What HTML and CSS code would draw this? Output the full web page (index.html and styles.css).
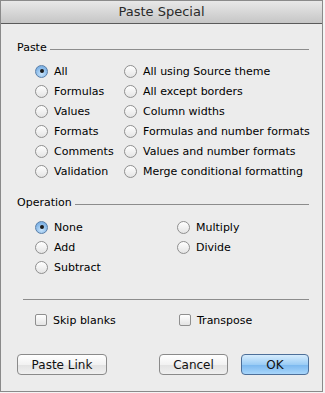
FILE: index.html
```html
<!DOCTYPE html>
<html lang="en">
  <head>
    <meta charset="UTF-8" />
    <title>Paste Special</title>
    <link rel="stylesheet" href="styles.css">
  </head>
  <body>
    <div class="dialog">
      <div class="titlebar">Paste Special</div>
      <div class="content">
        <div class="group-head"><span>Paste</span><i></i></div>
        <div class="options paste">
          <label class="opt"><span class="radio on"></span>All</label>
          <label class="opt"><span class="radio"></span>All using Source theme</label>
          <label class="opt"><span class="radio"></span>Formulas</label>
          <label class="opt"><span class="radio"></span>All except borders</label>
          <label class="opt"><span class="radio"></span>Values</label>
          <label class="opt"><span class="radio"></span>Column widths</label>
          <label class="opt"><span class="radio"></span>Formats</label>
          <label class="opt"><span class="radio"></span>Formulas and number formats</label>
          <label class="opt"><span class="radio"></span>Comments</label>
          <label class="opt"><span class="radio"></span>Values and number formats</label>
          <label class="opt"><span class="radio"></span>Validation</label>
          <label class="opt"><span class="radio"></span>Merge conditional formatting</label>
        </div>

        <div class="group-head op-head"><span>Operation</span><i></i></div>
        <div class="options operation">
          <label class="opt"><span class="radio on"></span>None</label>
          <label class="opt"><span class="radio"></span>Multiply</label>
          <label class="opt"><span class="radio"></span>Add</label>
          <label class="opt"><span class="radio"></span>Divide</label>
          <label class="opt"><span class="radio"></span>Subtract</label>
        </div>

        <hr class="sep" />

        <div class="options checks">
          <label class="opt"><span class="check"></span>Skip blanks</label>
          <label class="opt"><span class="check"></span>Transpose</label>
        </div>

        <div class="buttons">
          <button class="btn link">Paste Link</button>
          <span class="spacer"></span>
          <button class="btn cancel">Cancel</button>
          <button class="btn ok">OK</button>
        </div>
      </div>
    </div>
  </body>
</html>
```

FILE: styles.css
```css
html,
body {
  margin: 0;
  background: #f4f4f4;
}
body {
  font-family: "DejaVu Sans", "Liberation Sans", sans-serif;
  font-size: 11px;
  color: #000;
}
.dialog {
  width: 321px;
  height: 390px;
  border: 1px solid #8a8a8a;
  background: #ececec;
  display: flex;
  flex-direction: column;
}
.titlebar {
  height: 22px;
  line-height: 22px;
  text-align: center;
  font-size: 13px;
  color: #2a2a2a;
  background: linear-gradient(#e8e8e8, #c6c6c6);
  border-bottom: 1px solid #5a5a5a;
}
.content {
  padding: 16px 13px 0 16px;
  flex: 1;
  display: flex;
  flex-direction: column;
}
.group-head {
  display: flex;
  align-items: center;
  height: 14px;
}
.group-head span {
  margin-right: 3px;
}
.group-head i {
  flex: 1;
  border-top: 1px solid #8c8c8c;
  margin-top: 5px;
}
.options {
  display: grid;
  padding-left: 18px;
}
.paste {
  grid-template-columns: 89px 1fr;
  margin-top: 7px;
}
.op-head {
  margin-top: 14px;
}
.operation {
  grid-template-columns: 142px 1fr;
  margin-top: 8px;
}
.opt {
  display: flex;
  align-items: center;
  height: 20px;
  white-space: nowrap;
}
.radio {
  width: 11px;
  height: 11px;
  border: 1px solid #8f8f8f;
  border-radius: 50%;
  background: linear-gradient(#ffffff, #e4e4e4);
  margin-right: 6px;
  display: flex;
  align-items: center;
  justify-content: center;
  flex: none;
}
.radio.on {
  border-color: #5a7fa8;
  background: radial-gradient(circle at 50% 70%, #c8e4fb, #7fb3e6 70%);
}
.radio.on::after {
  content: "";
  width: 4px;
  height: 4px;
  border-radius: 50%;
  background: #1b1b1b;
}
.sep {
  border: 0;
  border-top: 1px solid #8c8c8c;
  margin: 22px 0 0 6px;
}
.checks {
  grid-template-columns: 144px 1fr;
  margin-top: 10px;
}
.check {
  width: 10px;
  height: 10px;
  border: 1px solid #8f8f8f;
  border-radius: 2px;
  background: linear-gradient(#ffffff, #e4e4e4);
  margin-right: 6px;
  flex: none;
}
.buttons {
  display: flex;
  margin-top: 24px;
  gap: 13px;
}
.spacer {
  flex: 1;
}
.btn {
  height: 21px;
  font-family: inherit;
  font-size: 12px;
  border: 1px solid #8a8a8a;
  border-radius: 4px;
  background: linear-gradient(#ffffff, #f2f2f2 50%, #e2e2e2 51%, #f0f0f0);
  padding: 0;
  color: #111;
}
.link {
  width: 90px;
}
.cancel {
  width: 69px;
}
.ok {
  width: 68px;
  border-color: #4d6f99;
  background: linear-gradient(#d6ecfd, #9ccdf5 50%, #7ab7ee 51%, #a8d6fb);
}
```
